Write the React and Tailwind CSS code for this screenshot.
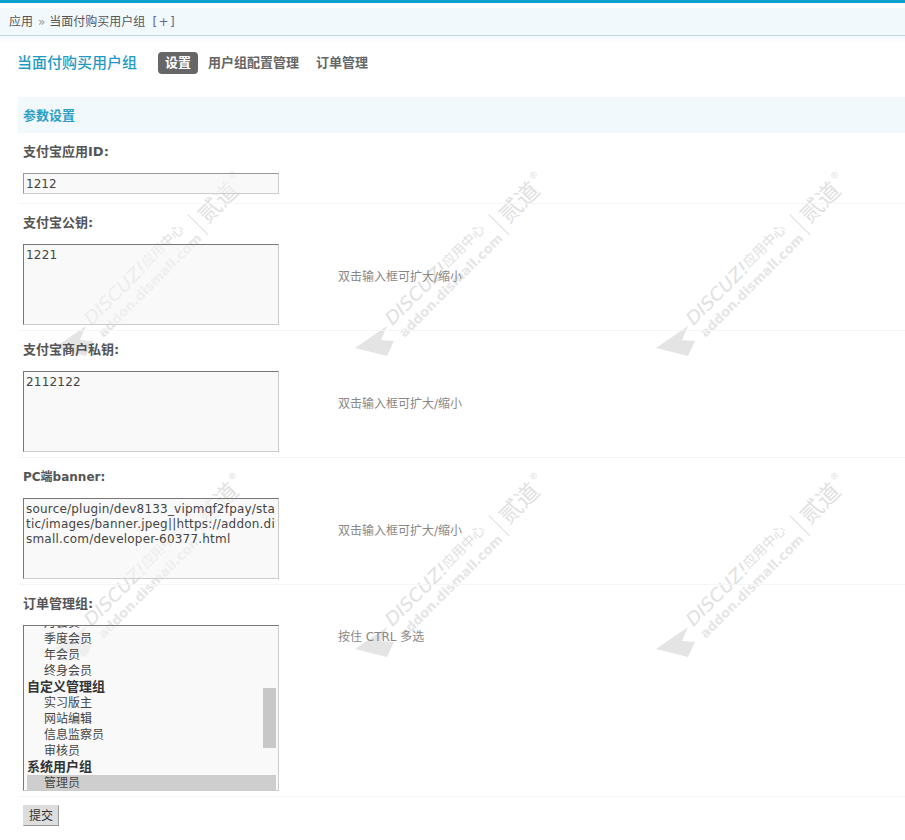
const rows = [
  { label: "支付宝公钥:", size: "text-[13px]", value: "1221", tip: "双击输入框可扩大/缩小" },
  { label: "支付宝商户私钥:", size: "text-[13px]", value: "2112122", tip: "双击输入框可扩大/缩小" },
  {
    label: "PC端banner:",
    size: "text-[12px]",
    value: "source/plugin/dev8133_vipmqf2fpay/static/images/banner.jpeg||https://addon.dismall.com/developer-60377.html",
    tip: "双击输入框可扩大/缩小",
  },
];

const options = [
  { text: "季度会员", indent: true },
  { text: "年会员", indent: true },
  { text: "终身会员", indent: true },
  { text: "自定义管理组" },
  { text: "实习版主", indent: true },
  { text: "网站编辑", indent: true },
  { text: "信息监察员", indent: true },
  { text: "审核员", indent: true },
  { text: "系统用户组" },
  { text: "管理员", indent: true, selected: true },
];

const marks = [
  [54, 348], [355, 348], [656, 348],
  [54, 649], [355, 649], [656, 649],
];

// watermark tile, anchored on the tip of the arrow
const Watermark = ({ x, y }) => (
  <g transform={`translate(${x} ${y})`} fill="#e1e1e1">
    <path d="M0 0 L32 -22 L26 -8 L39 -7 L32 8 Z" fill="#e4e4e4" />
    <g transform="rotate(-45)">
      <text x="42" y="11" textLength="80" lengthAdjust="spacingAndGlyphs" fontFamily="'DejaVu Sans', sans-serif" fontStyle="italic" fontSize="18">DISCUZ!</text>
      <text x="122" y="9" fontFamily="'Noto Sans CJK SC', sans-serif" fontSize="13.5">应用中心</text>
      <line x1="189" y1="0" x2="189" y2="29" stroke="#dedede" />
      <text x="196" y="21" fontFamily="'Noto Sans CJK SC', sans-serif" fontSize="23">贰道</text>
      <text x="244" y="7" fontFamily="'DejaVu Sans', sans-serif" fontSize="9">®</text>
      <text x="42" y="28" textLength="140" lengthAdjust="spacingAndGlyphs" fill="#e6e6e6" fontFamily="'DejaVu Sans', sans-serif" fontWeight="700" fontSize="13">addon.dismall.com</text>
    </g>
  </g>
);

const Note = ({ children }) => (
  <div className="ml-[59px] w-[300px] text-[12px] leading-[18px] text-[#888]">{children}</div>
);

const App = () => {
  return (
    <div className="relative h-[840px] w-[905px] overflow-hidden bg-white font-['DejaVu_Sans','Noto_Sans_CJK_SC',sans-serif] text-[12px] text-[#333]">
      <svg className="absolute left-0 top-0" width="905" height="840" aria-hidden="true">
        {marks.map(([x, y]) => (
          <Watermark key={`${x}-${y}`} x={x} y={y} />
        ))}
      </svg>

      <div className="relative">
        <div className="h-[3px] bg-[#0d9fd0]" />
        <div className="h-[5px] bg-white" />
        <div className="flex h-[28px] items-center border-b border-[#c5d5de] bg-[#f2f9fd] pl-[9px] text-[12px] text-[#555]">
          <span>应用</span>
          <span className="ml-[5px] mr-[4px] text-[#999]">»</span>
          <span>当面付购买用户组</span>
          <span className="ml-[7px] tracking-[1.5px] text-[#669]">[+]</span>
        </div>
        <div className="h-[7px] bg-gradient-to-b from-[#f2f9fd] to-white" />

        <div className="pl-[17px]">
          <div className="flex h-[40px] items-center">
            <h1 className="w-[141px] text-[15px] font-medium text-[#1f9ac4]">当面付购买用户组</h1>
            <span className="rounded-[4px] bg-[#666] px-[7px] py-[1px] text-[13px] font-bold text-white">设置</span>
            <span className="ml-[10px] text-[13px] font-bold text-[#666]">用户组配置管理</span>
            <span className="ml-[17px] text-[13px] font-bold text-[#666]">订单管理</span>
          </div>

          <div className="ml-[1px] mt-[14px] flex h-[36px] items-center bg-[#f2f9fd] pl-[5px] pt-[2px] text-[13px] font-bold text-[#2a9fc7]">参数设置</div>

          <div className="ml-[1px] border-b border-[#f5f5f5] pb-[9px] pl-[5px]">
            <div className="flex h-[36px] items-center pt-[2px] text-[13px] font-bold text-[#555]">支付宝应用ID:</div>
            <input
              readOnly
              value="1212"
              className="mt-[4px] block h-[21px] w-[256px] border border-[#999] border-r-[#ccc] border-b-[#ccc] bg-[#f5f5f5]/60 pl-[2px] text-[12px] text-[#444] outline-none"
            />
          </div>

          {rows.map((row) => (
            <div key={row.label} className="ml-[1px] border-b border-[#f5f5f5] pb-[5px] pl-[5px]">
              <div className={`flex h-[36px] items-center pt-[2px] font-bold text-[#555] ${row.size}`}>{row.label}</div>
              <div className="mt-[4px] flex items-center">
                <textarea
                  readOnly
                  value={row.value}
                  className="block h-[81px] w-[256px] resize-none overflow-hidden border border-[#777] border-r-[#ccc] border-b-[#ccc] bg-[#f5f5f5]/60 px-[2px] pb-[2px] pt-[3px] text-[12px] leading-[15px] tracking-[0.2px] text-[#444] outline-none"
                />
                <div className="pb-[15px]">
                  <Note>{row.tip}</Note>
                </div>
              </div>
            </div>
          ))}

          <div className="ml-[1px] border-b border-[#f5f5f5] pb-[5px] pl-[5px]">
            <div className="flex h-[36px] items-center pt-[2px] text-[13px] font-bold text-[#555]">订单管理组:</div>
            <div className="mt-[4px] flex items-start">
              <div className="relative h-[166px] w-[256px] overflow-hidden border border-[#777] border-r-[#ccc] border-b-[#ccc] bg-[#f5f5f5]/60 pl-[3px] pr-[2px]">
                <div className="-mt-[11px] pl-[17px] leading-[16px] text-[#444]">月会员</div>
                {options.map((o) => (
                  <div
                    key={o.text}
                    className={`h-[16px] leading-[16px] ${o.indent ? "pl-[17px] text-[#444]" : "text-[13px] font-bold text-[#333]"} ${o.selected ? "bg-[#cecece]" : ""}`}
                  >
                    {o.text}
                  </div>
                ))}
                <div className="absolute right-[2px] top-[62px] h-[60px] w-[13px] bg-[#c8c8c8]" />
              </div>
              <div className="pt-[3px]">
                <Note>按住 CTRL 多选</Note>
              </div>
            </div>
          </div>

          <div className="ml-[1px] pl-[5px] pt-[8px]">
            <button className="h-[21px] w-[36px] border border-[#999] border-l-[#ddd] border-t-[#ddd] bg-[#ddd] text-[12px] text-[#333]">提交</button>
          </div>
        </div>
      </div>
    </div>
  );
};

export default App;
